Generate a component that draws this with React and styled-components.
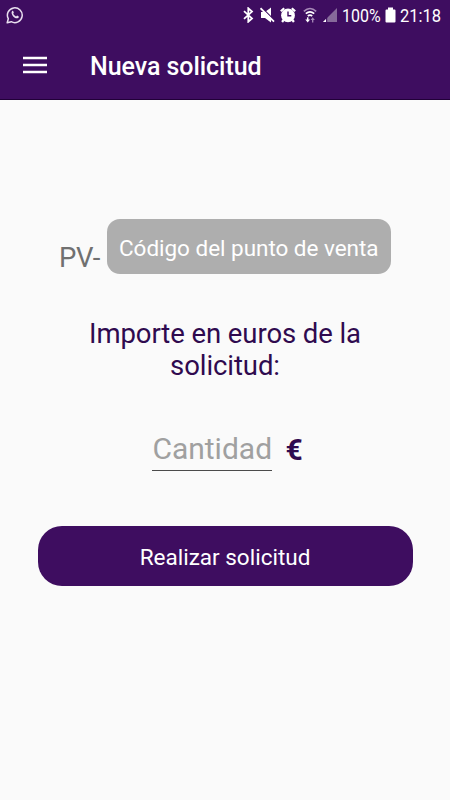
import React from "react";
import styled, { createGlobalStyle } from "styled-components";

const GlobalStyle = createGlobalStyle`
  * { box-sizing: border-box; }
  body { margin: 0; background: #fafafa; }
`;

const Screen = styled.div`
  width: 450px;
  height: 800px;
  overflow: hidden;
  display: flex;
  flex-direction: column;
  background: #fafafa;
  font-family: Roboto, "Liberation Sans", sans-serif;
`;

const Header = styled.header`
  height: 100px;
  flex: none;
  background: #3e0d60;
  border-bottom: 1px solid #210038;
  color: #fff;
`;

const StatusBar = styled.div`
  height: 30px;
  display: flex;
  align-items: center;
  justify-content: space-between;
  padding: 0 8px 0 6px;
`;

const StatusIcons = styled.div`
  display: flex;
  align-items: center;
`;

const StatusText = styled.span`
  font-size: 19px;
  line-height: 30px;
  width: ${(p) => p.$width}px;
  margin-left: ${(p) => p.$gap}px;
  white-space: nowrap;
  padding-top: 1px;
  transform: scaleX(${(p) => p.$scale});
  transform-origin: left center;
`;

const Icon = styled.svg`
  display: block;
  flex: none;
  margin-left: ${(p) => p.$gap || 0}px;
`;

const Toolbar = styled.div`
  height: 69px;
  display: flex;
  align-items: center;
  padding: 2px 0 0 23px;
`;

const MenuButton = styled.button`
  border: 0;
  padding: 0;
  margin: 0 43px 2px 0;
  background: none;
  color: inherit;
`;

const Title = styled.h1`
  margin: 0;
  padding-top: 2px;
  font-size: 25px;
  line-height: 30px;
  font-weight: 500;
  letter-spacing: -0.05px;
  white-space: nowrap;
`;

const Form = styled.main`
  flex: 1;
  display: flex;
  flex-direction: column;
  align-items: center;
  padding-top: 119px;
`;

const CodeRow = styled.div`
  display: flex;
  align-items: flex-start;
  gap: 7px;
`;

const Prefix = styled.span`
  font-size: 27.5px;
  line-height: 32px;
  width: 41px;
  margin-top: 23px;
  letter-spacing: -0.3px;
  color: #707070;
  white-space: nowrap;
`;

const CodeField = styled.div`
  width: 284px;
  height: 55px;
  border-radius: 13px;
  background: #aeaeae;
  color: #fff;
  font-size: 22.5px;
  line-height: 58px;
  letter-spacing: -0.03px;
  padding-left: 12px;
  white-space: nowrap;
`;

const Question = styled.p`
  width: 300px;
  margin: 44px 0 0;
  text-align: center;
  color: #2f0a4f;
  font-size: 27.5px;
  line-height: 32px;
  letter-spacing: -0.08px;
`;

const AmountRow = styled.div`
  display: flex;
  gap: 13px;
  margin: 49px 0 0 5px;
`;

const AmountField = styled.div`
  width: 120px;
  height: 40px;
  border-bottom: 1px solid #4b4b4b;
  color: #a0a0a0;
  font-size: 30px;
  line-height: 36px;
  white-space: nowrap;
`;

const Currency = styled.span`
  color: #2f0a4f;
  font-size: 30px;
  line-height: 37px;
  font-weight: 700;
`;

const SubmitButton = styled.button`
  width: 375px;
  height: 60px;
  margin-top: 55px;
  border: 0;
  border-radius: 24px;
  padding: 2px 0 0;
  background: #3e0d60;
  color: #fff;
  font-family: inherit;
  font-size: 22.5px;
`;

function WhatsApp() {
  return (
    <Icon width="18" height="18" viewBox="0 0 18 18" fill="none" stroke="#e9dfef">
      <path d="M1.2 16.8 2.3 12.7A7.4 7.4 0 1 1 5.3 15.7Z" strokeWidth="1.5" strokeLinejoin="round" />
      <path d="M6.1 5.1c.5-.5 1-.3 1.2.2l.5 1.2c.1.5-.6.9-.6 1.3.6 1.2 1.5 2 2.8 2.6.4.1.8-.9 1.2-.8l1.5.8c.5.3 0 1.4-.7 1.7-1.3.6-3.3-.2-4.8-1.7S5 6.4 6.1 5.1Z" fill="#e9dfef" stroke="none" />
    </Icon>
  );
}

function Bluetooth() {
  return (
    <Icon width="11" height="16" viewBox="0 0 11 16" fill="none" stroke="#fff" strokeWidth="1.8">
      <path d="m1 4.2 8 7.2-3.7 3.3V1.3L9 4.6 1 11.8" />
    </Icon>
  );
}

function Muted() {
  return (
    <Icon $gap={6} width="15" height="16" viewBox="0 0 15 16">
      <path d="M1 5h4l6-4.5v15L5 11H1Z" fill="#fff" />
      <path d="M1.4.2 14.7 13.5" stroke="#3e0d60" strokeWidth="1.3" />
      <path d="M.5 1.2 14 14.7" stroke="#fff" strokeWidth="1.8" />
    </Icon>
  );
}

function Alarm() {
  return (
    <Icon $gap={5} width="16" height="16" viewBox="0 0 16 16">
      <circle cx="8" cy="8.4" r="6.9" fill="#fff" />
      <path d="m.8 4.2 3.4-3M15.2 4.2l-3.4-3M3.5 13l-1.4 2M12.5 13l1.4 2" stroke="#fff" strokeWidth="2.2" />
      <path d="M8 4.5v4.3h3.3" fill="none" stroke="#3e0d60" strokeWidth="1.4" />
    </Icon>
  );
}

function Wifi() {
  return (
    <Icon $gap={7} width="14" height="16" viewBox="0 0 14 16" fill="none" stroke="#fff">
      <path d="M.8 4.3q6.2-5.6 12.4 0" stroke="#a78ab8" strokeWidth="1.6" />
      <path d="M2.8 6.6q4.2-3.6 8.4 0M4.8 9q2.2-1.9 4.4 0" strokeWidth="1.7" />
      <path d="M4.7 10.3v3" strokeWidth="1.5" />
      <path d="M2.3 12.6h4.8l-2.4 3Z" fill="#fff" stroke="none" />
      <path d="M9.7 15.5v-3" stroke="#a78ab8" strokeWidth="1.3" />
      <path d="M7.6 13.1h4.2l-2.1-2.8Z" fill="#a78ab8" stroke="none" />
    </Icon>
  );
}

function Signal() {
  return (
    <Icon $gap={5} width="15" height="16" viewBox="0 0 15 16">
      <path d="M15 1v14H1Z" fill="#866a9a" />
      <path d="M4 12v3H1Z" fill="#fff" />
      <path d="M4.7 10v5.5" stroke="#3e0d60" />
    </Icon>
  );
}

function Battery() {
  return (
    <Icon $gap={3} width="11" height="16" viewBox="0 0 11 16">
      <path d="M3 .5h5v2H9.5a1 1 0 0 1 1 1v11a1 1 0 0 1-1 1h-8a1 1 0 0 1-1-1v-11a1 1 0 0 1 1-1H3Z" fill="#fff" />
    </Icon>
  );
}

export default function App() {
  return (
    <Screen>
      <GlobalStyle />
      <Header>
        <StatusBar>
          <WhatsApp />
          <StatusIcons>
            <Bluetooth />
            <Muted />
            <Alarm />
            <Wifi />
            <Signal />
            <StatusText $width={40} $gap={5} $scale={0.84}>100%</StatusText>
            <Battery />
            <StatusText $width={42} $gap={4} $scale={0.87}>21:18</StatusText>
          </StatusIcons>
        </StatusBar>
        <Toolbar>
          <MenuButton aria-label="Menú">
            <Icon width="24" height="18" viewBox="0 0 24 18">
              <path d="M0 2h24M0 9h24M0 16h24" stroke="#fff" strokeWidth="2.5" />
            </Icon>
          </MenuButton>
          <Title>Nueva solicitud</Title>
        </Toolbar>
      </Header>
      <Form>
        <CodeRow>
          <Prefix>PV-</Prefix>
          <CodeField>Código del punto de venta</CodeField>
        </CodeRow>
        <Question>Importe en euros de la solicitud:</Question>
        <AmountRow>
          <AmountField>Cantidad</AmountField>
          <Currency>€</Currency>
        </AmountRow>
        <SubmitButton>Realizar solicitud</SubmitButton>
      </Form>
    </Screen>
  );
}
